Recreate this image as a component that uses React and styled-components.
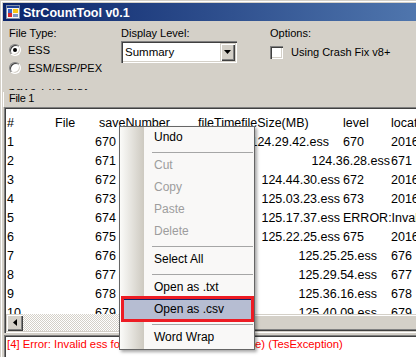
import React from "react";
import styled, { createGlobalStyle } from "styled-components";

const face = "#d4d0c8";
const shadow = "#808080";
const dark = "#404040";

const GlobalStyle = createGlobalStyle`
  html, body {
    margin: 0;
    padding: 0;
    background: ${face};
    overflow: hidden;
  }
  body {
    font-family: "Liberation Sans", Arial, sans-serif;
    font-size: 11px;
    color: #000;
  }
`;

const sunken = `
  box-shadow: inset 1px 1px 0 ${shadow}, inset 2px 2px 0 ${dark},
    inset -1px -1px 0 #fff, inset -2px -2px 0 ${face};
`;

const raised = `
  box-shadow: inset 1px 1px 0 ${face}, inset 2px 2px 0 #fff,
    inset -1px -1px 0 ${dark}, inset -2px -2px 0 ${shadow};
`;

const Window = styled.div`
  position: relative;
  width: 560px;
  height: 357px;
  box-sizing: border-box;
  padding: 3px 0 0 3px;
  background: ${face};
  box-shadow: inset 1px 1px 0 ${face}, inset 2px 2px 0 #fff;
`;

const TitleBar = styled.div`
  display: flex;
  align-items: center;
  gap: 2px;
  height: 18px;
  padding-left: 2px;
  background: linear-gradient(to right, #0a246a 0, #5279b0 430px, #a6caf0 560px);
`;

const Title = styled.span`
  font-weight: bold;
  font-size: 12.5px;
  color: #fff;
  line-height: 18px;
  padding-top: 1px;
`;

const Client = styled.div`
  padding-left: 1px;
`;

const Options = styled.div`
  display: flex;
  padding: 6px 0 0 5px;
`;

const Column = styled.div`
  flex: none;
  width: ${(p) => p.$w}px;
  display: flex;
  flex-direction: column;
`;

const Label = styled.div`
  line-height: 13px;
  height: 13px;
`;

const Choice = styled.label`
  display: flex;
  align-items: center;
  gap: ${(p) => p.$gap}px;
  height: 18px;
  line-height: 13px;
`;

const RadioList = styled.div`
  margin-top: 1px;
`;

const Radio = styled.span`
  position: relative;
  width: 12px;
  height: 12px;
  box-sizing: border-box;
  border-radius: 50%;
  border: 1px solid;
  border-color: ${shadow} #fff #fff ${shadow};
  background: #fff;
  box-shadow: inset 1px 1px 0 ${dark}, inset -1px -1px 0 ${face};

  &::after {
    content: "";
    display: ${(p) => (p.$checked ? "block" : "none")};
    position: absolute;
    left: 3px;
    top: 3px;
    width: 4px;
    height: 4px;
    border-radius: 50%;
    background: #000;
  }
`;

const Check = styled.span`
  width: 13px;
  height: 13px;
  box-sizing: border-box;
  background: #fff;
  ${sunken}
`;

const CheckRow = styled(Choice)`
  margin-top: 3px;
`;

const Combo = styled.div`
  display: flex;
  align-items: center;
  width: 116px;
  height: 22px;
  margin-top: 1px;
  box-sizing: border-box;
  padding: 2px;
  background: #fff;
  ${sunken}
`;

const ComboText = styled.span`
  flex: 1;
  padding-left: 2px;
  font-size: 11.5px;
  line-height: 18px;
`;

const DropButton = styled.span`
  display: flex;
  align-items: center;
  justify-content: center;
  width: 15px;
  height: 18px;
  background: ${face};
  ${raised}
`;

const TabArea = styled.div`
  margin-top: 12px;
`;

const ClippedLabel = styled.div`
  height: 3px;
  overflow: hidden;
  padding-left: 4px;

  span {
    display: block;
    line-height: 13px;
    margin-top: -9px;
    letter-spacing: 1px;
  }
`;

const TabHeader = styled.div`
  width: 36px;
  height: 15px;
  margin-left: -1px;
  padding-left: 5px;
  border-left: 1px solid #fff;
  line-height: 13px;
  letter-spacing: -0.3px;
`;

const TextBox = styled.div`
  display: flex;
  flex-direction: column;
  height: 226px;
  box-sizing: border-box;
  padding: 2px;
  background: #fff;
  ${sunken}
`;

const TextArea = styled.div`
  height: 205px;
  overflow: hidden;
  padding: 5px 0 0 1px;
  box-sizing: border-box;
  font-size: 12.5px;
`;

const Line = styled.div`
  display: flex;
  height: 19px;
  line-height: 19px;
  white-space: pre;
`;

const Cell = styled.span`
  flex: none;
  width: ${(p) => p.$w}px;
  padding-right: ${(p) => p.$pr}px;
  box-sizing: border-box;
  text-align: ${(p) => (p.$right ? "right" : "left")};
`;

const HScroll = styled.div`
  display: flex;
  height: 17px;
  background: repeating-conic-gradient(#fff 0 25%, ${face} 0 50%) 0 0 / 2px 2px;
`;

const ScrollButton = styled.span`
  display: flex;
  align-items: center;
  justify-content: center;
  width: 17px;
  height: 17px;
  background: ${face};
  ${raised}
`;

const Thumb = styled.span`
  margin-left: ${(p) => p.$offset}px;
  flex: 1;
  background: ${face};
  ${raised}
`;

const StatusBox = styled.div`
  margin-top: 2px;
  height: 24px;
  box-sizing: border-box;
  padding: 2px 0 0 3px;
  background: #fff;
  color: #f00;
  font-size: 11.3px;
  line-height: 14px;
  white-space: pre;
  ${sunken}
`;

const Menu = styled.div`
  position: absolute;
  left: 119px;
  top: 126px;
  width: 136px;
  box-sizing: border-box;
  border: 1px solid #666;
  background: linear-gradient(to right, #fbfbf9 0, #cdc9c0 24px, #f9f8f7 24px);
  box-shadow: 2px 2px 3px rgba(0, 0, 0, 0.35);
  font-size: 12px;
`;

const MenuItem = styled.div`
  position: relative;
  height: 22px;
  box-sizing: border-box;
  margin: 0 1px;
  padding-left: ${(p) => (p.$active ? 32 : 33)}px;
  line-height: ${(p) => (p.$active ? 19 : 20)}px;
  color: ${(p) => (p.$disabled ? "#9d9d9d" : "#000")};
  background: ${(p) => (p.$active ? "#b6bdd2" : "transparent")};
  border: ${(p) => (p.$active ? "1px solid #0a246a" : "none")};
`;

const Highlight = styled.span`
  position: absolute;
  left: -1px;
  right: -2px;
  top: -4px;
  bottom: -2px;
  border: 3px solid #ed1c24;
`;

const Separator = styled.div`
  height: 6px;
  margin: 0 1px 0 32px;
  display: flex;
  align-items: center;

  &::before {
    content: "";
    flex: 1;
    height: 1px;
    background: #a6a6a6;
  }
`;

const AppIcon = () => (
  <svg width="16" height="16" viewBox="0 0 16 16">
    <rect x="1.5" y="1.5" width="13" height="13" fill="#f4f4f4" stroke="#8391ab" />
    <rect x="2" y="2" width="12" height="2" fill="#1d3f93" />
    <rect x="3" y="5" width="4" height="4" fill="#3a64c8" />
    <rect x="3" y="9" width="4" height="4" fill="#d8262b" />
    <rect x="8" y="5" width="5" height="4" fill="#f6c414" />
    <rect x="8" y="10" width="5" height="3" fill="#7d96c2" />
  </svg>
);

const DownArrow = () => (
  <svg width="7" height="4" viewBox="0 0 7 4">
    <path d="M0 0h7L3.5 4z" fill="#000" />
  </svg>
);

const LeftArrow = () => (
  <svg width="4" height="7" viewBox="0 0 4 7">
    <path d="M4 0v7L0 3.5z" fill="#000" />
  </svg>
);

const lines = [
  [[7, "#"], [55, "File"], [99, "saveNumber"], [198, "fileTimefileSize(MB)"], [343, "level"], [391, "location"]],
  [[7, "1"], [95, "670"], [119, "124.29.42.ess", 329], [343, "670"], [391, "2016-08-17"]],
  [[7, "2"], [95, "671"], [119, "124.36.28.ess", 390], [391, "671"]],
  [[7, "3"], [95, "672"], [119, "124.44.30.ess", 340], [343, "672"], [391, "2016-08-17"]],
  [[7, "4"], [95, "673"], [119, "125.03.23.ess", 340], [343, "673"], [391, "2016-08-17"]],
  [[7, "5"], [95, "674"], [119, "125.17.37.ess", 340], [343, "ERROR:Invalid ess format"]],
  [[7, "6"], [95, "675"], [119, "125.22.25.ess", 340], [343, "675"], [391, "2016-08-17"]],
  [[7, "7"], [95, "676"], [119, "125.25.25.ess", 377], [391, "676"]],
  [[7, "8"], [95, "677"], [119, "125.29.54.ess", 377], [391, "677"]],
  [[7, "9"], [95, "678"], [119, "125.36.16.ess", 377], [391, "678"]],
  [[7, "10"], [95, "679"], [119, "125.40.09.ess", 377], [391, "679"]],
];

const menu = [
  { label: "Undo" },
  "-",
  { label: "Cut", disabled: true },
  { label: "Copy", disabled: true },
  { label: "Paste", disabled: true },
  { label: "Delete", disabled: true },
  "-",
  { label: "Select All" },
  "-",
  { label: "Open as .txt" },
  { label: "Open as .csv", active: true },
  "-",
  { label: "Word Wrap" },
];

const TextLine = ({ cells }) => (
  <Line>
    {cells.map(([x, text, end], i) => {
      const next = cells[i + 1] ? cells[i + 1][0] : x + 180;
      return (
        <Cell key={i} $w={next - x} $pr={end ? next - end : 0} $right={!!end}>
          {text}
        </Cell>
      );
    })}
  </Line>
);

const App = () => (
  <>
    <GlobalStyle />
    <Window>
      <TitleBar>
        <AppIcon />
        <Title>StrCountTool v0.1</Title>
      </TitleBar>
      <Client>
        <Options>
          <Column $w={112}>
            <Label>File Type:</Label>
            <RadioList>
              <Choice $gap={7}>
                <Radio $checked />
                ESS
              </Choice>
              <Choice $gap={7}>
                <Radio />
                ESM/ESP/PEX
              </Choice>
            </RadioList>
          </Column>
          <Column $w={149}>
            <Label>Display Level:</Label>
            <Combo>
              <ComboText>Summary</ComboText>
              <DropButton>
                <DownArrow />
              </DropButton>
            </Combo>
          </Column>
          <Column $w={160}>
            <Label>Options:</Label>
            <CheckRow $gap={8}>
              <Check />
              Using Crash Fix v8+
            </CheckRow>
          </Column>
        </Options>
        <TabArea>
          <ClippedLabel>
            <span>Save File List</span>
          </ClippedLabel>
          <TabHeader>File 1</TabHeader>
          <TextBox>
            <TextArea>
              {lines.map((cells, i) => (
                <TextLine key={i} cells={cells} />
              ))}
            </TextArea>
            <HScroll>
              <ScrollButton>
                <LeftArrow />
              </ScrollButton>
              <Thumb $offset={150} />
            </HScroll>
          </TextBox>
          <StatusBox>[4] Error: Invalid ess format (Using Crash Fix mode) (TesException)</StatusBox>
        </TabArea>
      </Client>
      <Menu>
        {menu.map((item, i) =>
          item === "-" ? (
            <Separator key={i} />
          ) : (
            <MenuItem key={i} $disabled={item.disabled} $active={item.active}>
              {item.label}
              {item.active && <Highlight />}
            </MenuItem>
          )
        )}
      </Menu>
    </Window>
  </>
);

export default App;
